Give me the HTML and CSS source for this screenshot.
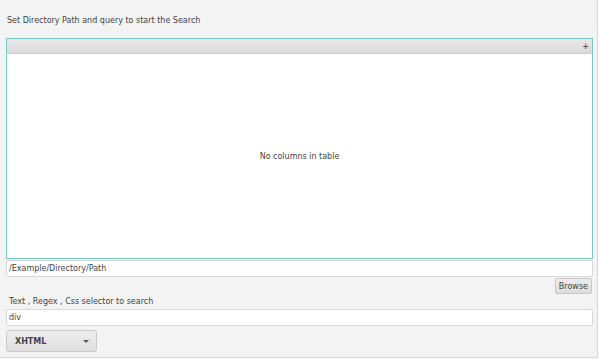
FILE: index.html
```html
<!doctype html>
<html>

<head>
    <link rel="stylesheet" href="styles.css">
</head>

<body>
    <div id="window">
        <p class="hint">Set Directory Path and query to start the Search</p>
        <div class="table">
            <div class="table-header"><span class="plus">+</span></div>
            <div class="table-body">No columns in table</div>
        </div>
        <div class="field path">/Example/Directory/Path</div>
        <div class="browse-row">
            <button class="btn">Browse</button>
        </div>
        <p class="label">Text , Regex , Css selector to search</p>
        <div class="field">div</div>
        <div class="combo">
            <span>XHTML</span>
            <span class="arrow"></span>
        </div>
    </div>
</body>

</html>
```

FILE: styles.css
```css
html,
body {
    width: 100%;
    height: 100%;
    margin: 0;
    overflow: hidden;
    background-color: #ffffff;
}

#window {
    width: 587px;
    height: 357px;
    padding: 0 4px 0 6px;
    background-color: #f3f3f3;
    border-right: 1px solid #d6d6d6;
    border-bottom: 1px solid #d6d6d6;
    font-family: "DejaVu Sans", sans-serif;
    font-size: 8px;
    color: #444444;
    display: flex;
    flex-direction: column;
}

.hint {
    margin: 16px 0 0 1px;
    height: 14px;
    line-height: 10px;
}

.table {
    margin-top: 8px;
    height: 219px;
    border: 1px solid #7cc6d2;
    background-color: #ffffff;
    display: flex;
    flex-direction: column;
}

.table-header {
    height: 12px;
    border-top: 2px solid #f1e2ea;
    border-bottom: 1px solid #cfcfcf;
    background: linear-gradient(#e6e6e6, #d9dad8);
    display: flex;
    justify-content: flex-end;
    align-items: center;
}

.plus {
    font-size: 8px;
    font-weight: bold;
    color: #555555;
    margin-right: 3px;
    line-height: 8px;
}

.table-body {
    flex: 1;
    display: flex;
    align-items: center;
    justify-content: center;
}

.field {
    margin-top: 1px;
    height: 15px;
    line-height: 15px;
    padding-left: 2px;
    background-color: #ffffff;
    border: 1px solid #d8d8d8;
    border-radius: 2px;
    color: #444444;
}

.path {
    margin-top: 1px;
}

.browse-row {
    display: flex;
    justify-content: flex-end;
    margin-top: 1px;
    padding-right: 1px;
}

.btn {
    font-family: inherit;
    font-size: 8px;
    color: #444444;
    height: 16px;
    padding: 0 3px;
    border: 1px solid #c9c9c9;
    border-radius: 2px;
    background: linear-gradient(#ececec, #dcdcdc);
}

.label {
    margin: 1px 0 0 3px;
    height: 13px;
    line-height: 13px;
}

.combo {
    margin-top: 4px;
    width: 74px;
    height: 20px;
    padding: 0 7px 0 8px;
    border: 1px solid #c8c8c8;
    border-radius: 3px;
    background: linear-gradient(#eeeeee, #dedede);
    display: flex;
    align-items: center;
    justify-content: space-between;
    font-weight: bold;
    color: #444444;
}

.arrow {
    width: 0;
    height: 0;
    border-left: 3px solid transparent;
    border-right: 3px solid transparent;
    border-top: 3px solid #555555;
}
```
